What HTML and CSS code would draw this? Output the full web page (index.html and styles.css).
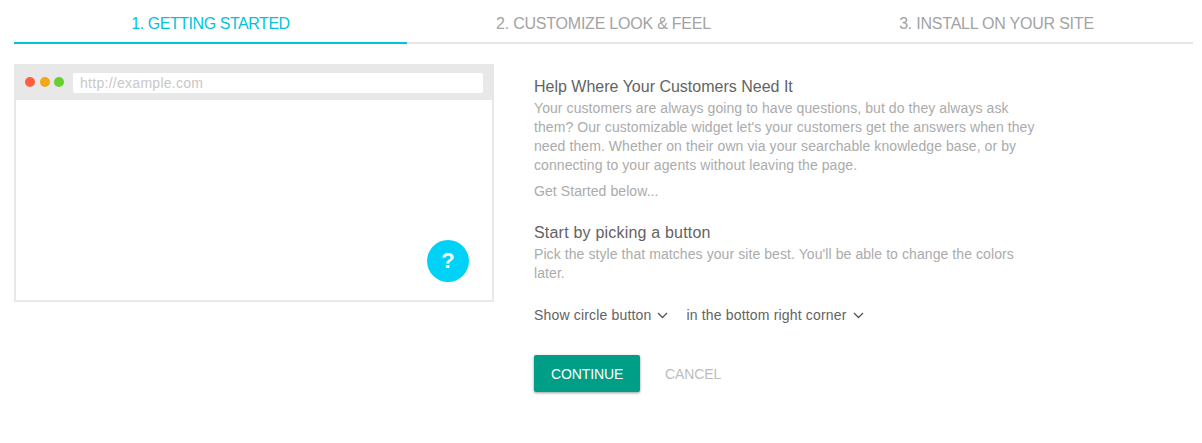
FILE: index.html
```html
<!DOCTYPE html>
<html lang="en">
<head>
<meta charset="utf-8">
<title>Getting Started</title>
<link rel="stylesheet" href="styles.css">
</head>
<body>
<nav class="tabs">
  <div class="tab active">1. GETTING STARTED</div>
  <div class="tab">2. CUSTOMIZE LOOK &amp; FEEL</div>
  <div class="tab">3. INSTALL ON YOUR SITE</div>
</nav>
<main class="content">
  <div class="browser">
    <div class="browser-bar">
      <div class="dots"><span class="dot red"></span><span class="dot orange"></span><span class="dot green"></span></div>
      <div class="url">http://example.com</div>
    </div>
    <div class="browser-body">
      <div class="help-btn">?</div>
    </div>
  </div>
  <section class="panel">
    <h2 class="title">Help Where Your Customers Need It</h2>
    <p class="text">Your customers are always going to have questions, but do they always ask them? Our customizable widget let's your customers get the answers when they need them. Whether on their own via your searchable knowledge base, or by connecting to your agents without leaving the page.</p>
    <p class="text below">Get Started below...</p>
    <h2 class="title second">Start by picking a button</h2>
    <p class="text">Pick the style that matches your site best. You'll be able to change the colors later.</p>
    <div class="selects">
      <div class="select">Show circle button
        <svg class="chev" width="11" height="7" viewBox="0 0 11 7"><path d="M1 1l4.5 4.5L10 1" fill="none" stroke="#555" stroke-width="1.3"/></svg>
      </div>
      <div class="select">in the bottom right corner
        <svg class="chev" width="11" height="7" viewBox="0 0 11 7"><path d="M1 1l4.5 4.5L10 1" fill="none" stroke="#555" stroke-width="1.3"/></svg>
      </div>
    </div>
    <div class="actions">
      <button class="btn primary">CONTINUE</button>
      <button class="btn ghost">CANCEL</button>
    </div>
  </section>
</main>
</body>
</html>
```
FILE: styles.css
```css
* { box-sizing: border-box; }
html, body { margin: 0; padding: 0; }
body {
  width: 1202px;
  height: 443px;
  overflow: hidden;
  background: #fff;
  font-family: "Liberation Sans", Arial, sans-serif;
  padding: 0 9px 0 14px;
}
.tabs { display: flex; }
.tab {
  flex: 1;
  height: 44px;
  padding-top: 15px;
  text-align: center;
  font-size: 16px;
  line-height: 18px;
  letter-spacing: -0.22px;
  color: #a3a3a3;
  border-bottom: 2px solid #e6e6e6;
}
.tab.active { color: #00c4dc; border-bottom-color: #00c4dc; letter-spacing: -0.45px; }
.content { display: flex; padding-top: 20px; }
.browser {
  width: 480px;
  height: 238px;
  border: 2px solid #e8e8e8;
  border-top: 0;
  flex: none;
}
.browser-bar {
  height: 36px;
  margin: 0 -2px;
  background: #e8e8e8;
  display: flex;
  align-items: flex-start;
  padding: 9px 11px 0 11px;
}
.dots { display: flex; gap: 4.5px; padding-top: 4px; width: 48px; flex: none; }
.dot { width: 10px; height: 10px; border-radius: 50%; }
.red { background: #ff5f3f; }
.orange { background: #f0a818; }
.green { background: #68cf30; }
.url {
  flex: 1;
  height: 20px;
  background: #fff;
  border-radius: 2px;
  font-size: 14px;
  letter-spacing: 0.28px;
  line-height: 20px;
  padding-left: 7px;
  color: #c8c8c8;
}
.browser-body {
  height: 200px;
  display: flex;
  justify-content: flex-end;
  align-items: flex-end;
  padding: 0 23px 18px 0;
}
.help-btn {
  width: 42px;
  height: 42px;
  border-radius: 50%;
  background: #00d2f7;
  color: #fff;
  font-size: 22px;
  font-weight: 700;
  line-height: 41px;
  text-align: center;
}
.panel { margin-left: 40px; width: 506px; padding-top: 13px; }
.title {
  margin: 0 0 2px;
  font-size: 16px;
  font-weight: 400;
  line-height: 20px;
  color: #636363;
}
.text {
  margin: 0;
  font-size: 14px;
  letter-spacing: 0.08px;
  line-height: 19px;
  color: #ababab;
}
.below { margin-top: 7px; }
.second { margin-top: 22px; letter-spacing: 0.2px; }
.selects { display: flex; gap: 18px; margin-top: 22px; height: 20px; }
.select {
  font-size: 14px;
  letter-spacing: 0.17px;
  line-height: 20px;
  color: #636363;
  display: flex;
  align-items: center;
  gap: 6px;
}
.actions { display: flex; gap: 8px; margin-top: 30px; }
.btn {
  font-family: inherit;
  font-size: 14px;
  height: 37px;
  border: 0;
  border-radius: 2px;
  padding: 0 17px;
  background: none;
}
.primary {
  width: 106px;
  background: #009e86;
  color: #fff;
  box-shadow: 0 1px 3px rgba(0, 0, 0, 0.4);
  letter-spacing: -0.1px;
}
.ghost { color: #bdbdbd; letter-spacing: -0.1px; }
```
